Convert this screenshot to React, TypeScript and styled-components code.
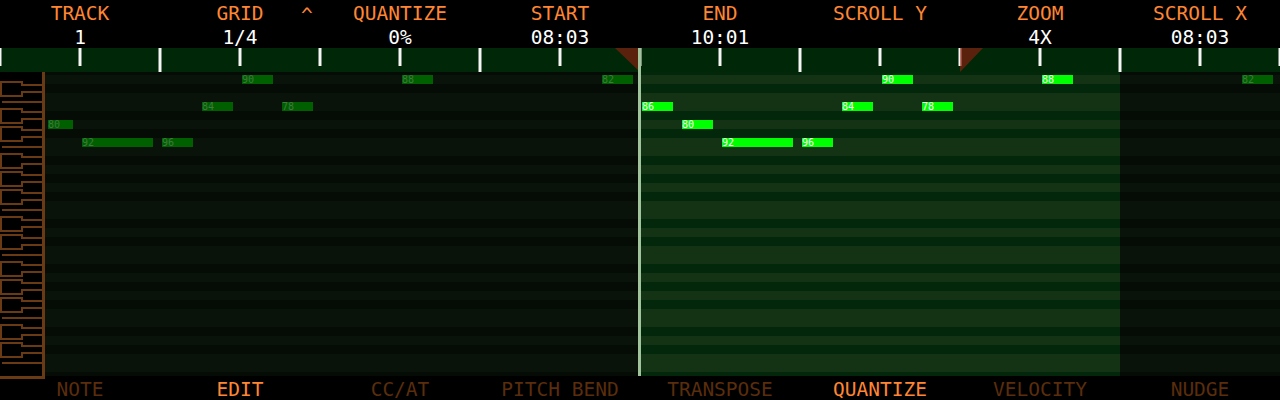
import React from "react";
import styled, { createGlobalStyle } from "styled-components";

const GlobalStyle = createGlobalStyle`
  html, body { margin: 0; padding: 0; background: #000; }
  body { width: 1280px; height: 400px; overflow: hidden; font-family: "DejaVu Sans Mono", monospace; }
`;

const ORANGE = "#ff8632";
const FONT = `"DejaVu Sans Mono", "Liberation Mono", monospace`;

const Screen = styled.div`
  width: 1280px;
  height: 400px;
  background: #000;
  display: flex;
  flex-direction: column;
  overflow: hidden;
  font-family: ${FONT};
`;

const Header = styled.div`
  height: 48px;
  flex-shrink: 0;
  display: grid;
  grid-template-columns: repeat(8, 160px);
`;

const HeaderCell = styled.div`
  position: relative;
  display: flex;
  flex-direction: column;
  align-items: center;
  padding-top: 2px;
`;

const Label = styled.div`
  font-size: 19.5px;
  line-height: 24px;
  color: ${ORANGE};
  white-space: pre;
`;

const Value = styled.div`
  font-size: 19.5px;
  line-height: 20px;
  height: 20px;
  margin-top: 2px;
  color: #fff;
  white-space: pre;
`;

const Caret = styled.span`
  position: absolute;
  left: 141px;
  top: 3.5px;
  font-size: 19.5px;
  line-height: 24px;
  color: ${ORANGE};
`;

const Timeline = styled.div`
  position: relative;
  height: 328px;
  flex-shrink: 0;
  display: flex;
  flex-direction: column;
`;

const Ruler = styled.div`
  position: relative;
  height: 24px;
  flex-shrink: 0;
  background: #002808;
  display: flex;
  overflow: hidden;
`;

const TickSlot = styled.div<{ $major: boolean }>`
  position: relative;
  width: 80px;
  height: 100%;
  flex-shrink: 0;
  &::before {
    content: "";
    position: absolute;
    left: -1px;
    top: 0;
    width: 2px;
    height: ${(p) => (p.$major ? "24px" : "18px")};
    background: #f4f6f4;
    box-shadow: -1px 0 0 #7c8c7c, 1px 0 0 #7c8c7c;
  }
`;

const Marker = styled.svg<{ $left: number }>`
  position: absolute;
  top: 0;
  left: ${(p) => p.$left}px;
  display: block;
`;

const Body = styled.div`
  height: 304px;
  display: flex;
`;

const Piano = styled.svg`
  flex-shrink: 0;
  display: block;
  overflow: visible;
  position: relative;
  z-index: 2;
`;

const Roll = styled.div`
  position: relative;
  flex: 1;
  overflow: hidden;
  display: flex;
  flex-direction: column;
`;

const Row = styled.div<{ $h: number }>`
  height: ${(p) => p.$h}px;
  flex-shrink: 0;
  display: grid;
  grid-template-columns: 595px 480px 160px;
`;

const Seg = styled.div<{ $black: boolean; $sel: boolean }>`
  background: ${(p) =>
    p.$sel
      ? p.$black
        ? "#03270a"
        : "#143214"
      : p.$black
      ? "#050b05"
      : "#0a130a"};
`;

const Note = styled.div<{ $active: boolean }>`
  position: absolute;
  height: 9px;
  background: ${(p) => (p.$active ? "#00ff00" : "#006000")};
  color: ${(p) => (p.$active ? "#ffffff" : "#3f7a3f")};
  font-size: 10px;
  line-height: 9px;
  white-space: pre;
`;

const Playhead = styled.div`
  position: absolute;
  left: 638px;
  top: 0;
  bottom: 0;
  width: 3px;
  background: #a2c49c;
  z-index: 3;
`;

const Footer = styled.div`
  height: 24px;
  flex-shrink: 0;
  display: grid;
  grid-template-columns: repeat(8, 160px);
  box-sizing: border-box;
  padding-top: 3px;
`;

const Tab = styled.div<{ $active: boolean }>`
  text-align: center;
  font-size: 19.5px;
  line-height: 21px;
  color: ${(p) => (p.$active ? ORANGE : "#5a2d0c")};
  white-space: pre;
`;

const fields = [
  { label: "TRACK", value: "1" },
  { label: "GRID", value: "1/4", caret: true },
  { label: "QUANTIZE", value: "0%" },
  { label: "START", value: "08:03" },
  { label: "END", value: "10:01" },
  { label: "SCROLL Y", value: "" },
  { label: "ZOOM", value: "4X" },
  { label: "SCROLL X", value: "08:03" },
];

const tabs = [
  { name: "NOTE", active: false },
  { name: "EDIT", active: true },
  { name: "CC/AT", active: false },
  { name: "PITCH BEND", active: false },
  { name: "TRANSPOSE", active: false },
  { name: "QUANTIZE", active: true },
  { name: "VELOCITY", active: false },
  { name: "NUDGE", active: false },
];

const BLACK = new Set([1, 4, 6, 9, 11]);
const isBlack = (r: number) => BLACK.has(((r % 12) + 12) % 12);

// rows: r=-1 partial (3px), r=0..32 full (9px), r=33 partial (4px)
const rows: { r: number; h: number }[] = [{ r: -1, h: 3 }];
for (let r = 0; r <= 32; r++) rows.push({ r, h: 9 });
rows.push({ r: 33, h: 4 });

const ROLL_X = 45;
const ROLL_Y = 72;
const VIEW_LEFT = 48;

const pattern: [number, number, number, string][] = [
  [2, 31, 3, "86"],
  [42, 31, 5, "80"],
  [82, 71, 7, "92"],
  [162, 31, 7, "96"],
  [202, 31, 3, "84"],
  [242, 31, 0, "90"],
  [282, 31, 3, "78"],
  [402, 31, 0, "88"],
  [602, 31, 0, "82"],
];

type N = { x: number; w: number; r: number; v: string; active: boolean };
const notes: N[] = [];
[0, 640].forEach((off) => {
  pattern.forEach(([x, w, r, v]) => {
    let nx = x + off;
    let nw = w;
    if (nx + nw <= VIEW_LEFT) return;
    if (nx < VIEW_LEFT) {
      nw -= VIEW_LEFT - nx;
      nx = VIEW_LEFT;
    }
    notes.push({ x: nx, w: nw, r, v, active: nx >= 640 && nx < 1120 });
  });
});

const KEY = "#6a3a14";

function PianoKeys() {
  const items: React.ReactNode[] = [];
  for (let r = 0; r <= 32; r++) {
    const top = 3 + 9 * r;
    const m = r % 12;
    if (isBlack(r)) {
      items.push(
        <path
          key={"b" + r}
          d={`M42 ${top + 1} H22 V${top - 2} H1 V${top + 12} H22 V${top + 8} H42`}
          fill="none"
          stroke={KEY}
          strokeWidth={2}
        />
      );
    }
    if (m === 3 || m === 8) {
      items.push(
        <line key={"s" + r} x1={2} y1={top} x2={42} y2={top} stroke={KEY} strokeWidth={2} />
      );
    }
  }
  return (
    <Piano width={45} height={304} viewBox="0 0 45 304">
      <rect x={0} y={0} width={45} height={307} fill="#000" />
      {items}
      <rect x={42} y={0} width={3} height={307} fill={KEY} />
      <rect x={0} y={304} width={45} height={3} fill={KEY} />
    </Piano>
  );
}

export default function App() {
  const ticks = Array.from({ length: 17 }, (_, k) => k);
  return (
    <>
      <GlobalStyle />
      <Screen>
        <Header>
          {fields.map((f) => (
            <HeaderCell key={f.label}>
              <Label>{f.label}</Label>
              <Value>{f.value}</Value>
              {f.caret && <Caret>^</Caret>}
            </HeaderCell>
          ))}
        </Header>
        <Timeline>
          <Ruler>
            {ticks.map((k) => (
              <TickSlot key={k} $major={k % 4 === 2} />
            ))}
            <Marker $left={615} width={25} height={24} viewBox="0 0 25 24">
              <polygon points="0,0 25,0 25,24" fill="rgba(150,30,15,0.6)" />
            </Marker>
            <Marker $left={960} width={23} height={24} viewBox="0 0 23 24">
              <polygon points="0,0 23,0 0,24" fill="rgba(150,30,15,0.6)" />
            </Marker>
          </Ruler>
          <Body>
            <PianoKeys />
            <Roll>
              {rows.map((row) => {
                const b = isBlack(row.r);
                return (
                  <Row key={row.r} $h={row.h}>
                    <Seg $black={b} $sel={false} />
                    <Seg $black={b} $sel={true} />
                    <Seg $black={b} $sel={false} />
                  </Row>
                );
              })}
              {notes.map((n, i) => (
                <Note
                  key={i}
                  $active={n.active}
                  style={{ left: n.x - ROLL_X, top: 75 + 9 * n.r - ROLL_Y, width: n.w }}
                >
                  {n.v}
                </Note>
              ))}
            </Roll>
          </Body>
          <Playhead />
        </Timeline>
        <Footer>
          {tabs.map((t) => (
            <Tab key={t.name} $active={t.active}>
              {t.name}
            </Tab>
          ))}
        </Footer>
      </Screen>
    </>
  );
}
